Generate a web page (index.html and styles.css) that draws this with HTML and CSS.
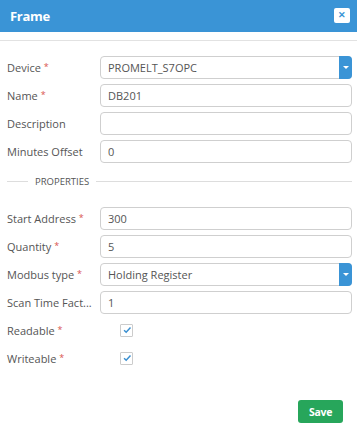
FILE: index.html
```html
<!DOCTYPE html>
<html lang="en">
<head>
    <meta charset="UTF-8">
    <title>Frame</title>
    <link rel="stylesheet" href="styles.css">
</head>
<body>
    <div class="dialog">
        <div class="dialog-header">
            <span class="dialog-title">Frame</span>
            <button class="close-btn" type="button">&#x2715;</button>
        </div>
        <form class="dialog-body">
            <div class="field">
                <label>Device <span class="req">*</span></label>
                <div class="select">
                    <span class="select-value">PROMELT_S7OPC</span>
                    <span class="select-arrow"></span>
                </div>
            </div>
            <div class="field">
                <label>Name <span class="req">*</span></label>
                <input type="text" value="DB201">
            </div>
            <div class="field">
                <label>Description</label>
                <input type="text" value="">
            </div>
            <div class="field">
                <label>Minutes Offset</label>
                <input type="text" value="0">
            </div>

            <div class="divider"><span>PROPERTIES</span></div>

            <div class="field">
                <label>Start Address <span class="req">*</span></label>
                <input type="text" value="300">
            </div>
            <div class="field">
                <label>Quantity <span class="req">*</span></label>
                <input type="text" value="5">
            </div>
            <div class="field">
                <label>Modbus type <span class="req">*</span></label>
                <div class="select">
                    <span class="select-value">Holding Register</span>
                    <span class="select-arrow"></span>
                </div>
            </div>
            <div class="field">
                <label>Scan Time Fact...</label>
                <input type="text" value="1">
            </div>
            <div class="field check-field">
                <label>Readable <span class="req">*</span></label>
                <span class="checkbox">
                    <svg viewBox="0 0 12 12" width="12" height="12"><path d="M2.5 6.2 L5 8.6 L10.2 3" fill="none" stroke="#3a8fd0" stroke-width="1.8"/></svg>
                </span>
            </div>
            <div class="field check-field">
                <label>Writeable <span class="req">*</span></label>
                <span class="checkbox">
                    <svg viewBox="0 0 12 12" width="12" height="12"><path d="M2.5 6.2 L5 8.6 L10.2 3" fill="none" stroke="#3a8fd0" stroke-width="1.8"/></svg>
                </span>
            </div>

            <div class="actions">
                <button type="button" class="save-btn">Save</button>
            </div>
        </form>
    </div>
</body>
</html>
```

FILE: styles.css
```css
body {
    margin: 0;
    background-color: white;
    font-family: 'Open Sans', sans-serif;
    font-size: 11px;
    color: #555;
}
.dialog {
    width: 357px;
    height: 437px;
}
.dialog-header {
    height: 32px;
    background-color: #3a94d6;
    display: flex;
    align-items: center;
    justify-content: space-between;
    padding: 0 7px 0 10px;
    box-sizing: border-box;
}
.dialog-title {
    color: white;
    font-weight: 700;
    font-size: 13px;
    letter-spacing: -0.3px;
}
.close-btn {
    width: 16px;
    height: 15px;
    border: none;
    border-radius: 2px;
    background-color: white;
    color: #3a94d6;
    font-size: 9px;
    font-weight: 700;
    padding: 0;
    line-height: 15px;
    margin-top: -1px;
}
.dialog-body {
    margin-top: 8px;
    border-top: 1px solid #e2e2e2;
    padding: 15px 5px 0 7px;
}
.field {
    display: flex;
    align-items: center;
    height: 23px;
    margin-bottom: 5px;
}
.field label {
    width: 93px;
    flex-shrink: 0;
    font-size: 11px;
    color: #555;
}
.req {
    color: #d9534f;
    font-size: 9px;
    vertical-align: top;
}
.field input,
.select {
    flex: 1;
    height: 23px;
    box-sizing: border-box;
    border: 1px solid #cfcfcf;
    border-radius: 4px;
    padding: 0 7px;
    font-family: inherit;
    font-size: 11px;
    color: #555;
    outline: none;
}
.select {
    display: flex;
    align-items: center;
    justify-content: space-between;
    padding-right: 0;
    position: relative;
}
.select-arrow {
    position: absolute;
    top: -1px;
    right: -1px;
    width: 13px;
    height: 23px;
    background-color: #3a94d6;
    border-radius: 0 4px 4px 0;
}
.select-arrow::after {
    content: '';
    position: absolute;
    left: 4px;
    top: 10px;
    border-left: 3px solid transparent;
    border-right: 3px solid transparent;
    border-top: 3px solid white;
}
.divider {
    display: flex;
    align-items: center;
    margin: 12px 0 19px;
    font-size: 9.5px;
    color: #555;
}
.divider::before {
    content: '';
    width: 21px;
    border-top: 1px solid #ddd;
    margin-right: 7px;
}
.divider::after {
    content: '';
    flex: 1;
    border-top: 1px solid #ddd;
    margin-left: 7px;
}
.check-field {
    height: 23px;
    margin-bottom: 5px;
}
.checkbox {
    margin-left: 20px;
    width: 11px;
    height: 11px;
    border: 1px solid #ccc;
    border-radius: 1px;
    display: flex;
    align-items: center;
    justify-content: center;
}
.checkbox svg {
    margin-top: -2px;
    margin-left: 1px;
}
.actions {
    display: flex;
    justify-content: flex-end;
    margin-top: 30px;
    padding-right: 9px;
}
.save-btn {
    width: 45px;
    height: 23px;
    background-color: #27a65b;
    border: none;
    border-radius: 3px;
    color: white;
    font-family: inherit;
    font-weight: 700;
    font-size: 10.5px;
    letter-spacing: -0.3px;
}
```
